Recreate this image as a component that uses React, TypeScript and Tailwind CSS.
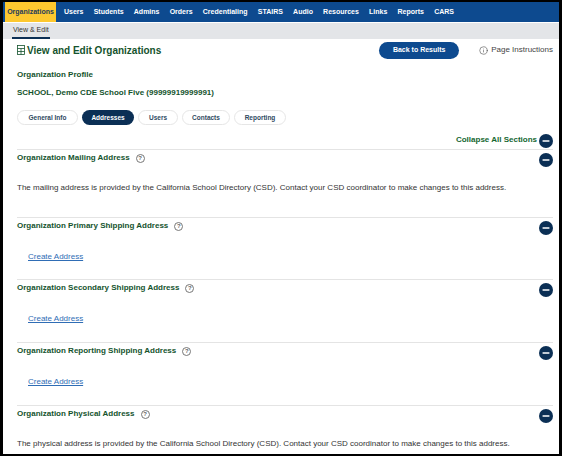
import { Info, Minus } from "lucide-react";

const navItems = ["Users", "Students", "Admins", "Orders", "Credentialing", "STAIRS", "Audio", "Resources", "Links", "Reports", "CARS"];
const tabs = [
  { label: "General Info", width: "w-[61px]" },
  { label: "Addresses", width: "w-[52px]" },
  { label: "Users", width: "w-[40px]" },
  { label: "Contacts", width: "w-[48px]" },
  { label: "Reporting", width: "w-[52px]" },
];
const csdNote = "address is provided by the California School Directory (CSD). Contact your CSD coordinator to make changes to this address.";

function CollapseIcon() {
  return (
    <span className="flex h-[14px] w-[14px] shrink-0 items-center justify-center rounded-full bg-[#0b2f55]">
      <Minus size={10} strokeWidth={3.5} className="text-white" />
    </span>
  );
}

function HelpIcon() {
  return (
    <span className="ml-[6px] flex h-[9px] w-[9px] items-center justify-center rounded-full border border-[#777] text-[6px] leading-none text-[#666]">
      ?
    </span>
  );
}

function Section({ title, note, height }: { title: string; note?: string; height: string }) {
  return (
    <section className={`border-t border-[#e4e4e4] ${height}`}>
      <div className="flex items-start justify-between pt-[2px]">
        <h3 className="flex items-center text-[8px] font-bold leading-[12px] text-[#14532d]">
          {title}
          <HelpIcon />
        </h3>
        <span className="mt-[1px]">
          <CollapseIcon />
        </span>
      </div>
      {note ? (
        <p className="mt-[15px] text-[8px] leading-[12px] text-[#333]">The {note} {csdNote}</p>
      ) : (
        <a className="ml-[11px] mt-[16px] block text-[8px] leading-[12px] text-[#2f6db5] underline">Create Address</a>
      )}
    </section>
  );
}

export default function App() {
  return (
    <div className="h-[456px] w-[562px] overflow-hidden bg-black pb-[2px] pl-[3px] pr-[3px] pt-[2px] font-['Liberation_Sans',Arial,sans-serif]">
      <div className="h-full overflow-hidden bg-white">
        <nav className="flex h-[20px] bg-[#0d4a8f] pl-[2px] text-[7px] font-bold text-white">
          <span className="flex w-[51px] items-center justify-center bg-[#fdc82f] text-[#1d3b5c]">Organizations</span>
          <div className="ml-[8px] flex items-center gap-[10.2px]">
            {navItems.map((item) => (
              <span key={item}>{item}</span>
            ))}
          </div>
        </nav>
        <div className="mt-[1px] flex h-[16px] bg-[#e3e5e8] pl-[9px] text-[7px] text-[#333]">
          <span className="flex h-full items-center border-b-2 border-[#0b2f55] px-[1px]">View &amp; Edit</span>
        </div>

        <div className="pl-[14px] pr-[6px]">
          <div className="mt-[2px] flex h-[18px] items-center justify-between">
            <h1 className="flex items-center text-[10px] font-bold text-[#14532d]">
              <svg width="8" height="10" viewBox="0 0 8 10" fill="none" stroke="#14532d" strokeWidth="0.8" className="mr-[2px]">
                <rect x="0.5" y="0.5" width="7" height="9" />
                <path d="M4 3.5V9.5M0.5 3.5H7.5M0.5 6.5H7.5" />
              </svg>
              View and Edit Organizations
            </h1>
            <div className="flex items-center">
              <button className="h-[17px] w-[80px] rounded-full bg-[#0d4a8f] text-[7px] font-bold text-white">Back to Results</button>
              <span className="ml-[20px] flex items-center text-[8px] text-[#444]">
                <Info size={9} strokeWidth={1.5} className="mr-[3px]" />
                Page Instructions
              </span>
            </div>
          </div>

          <p className="mt-[10px] text-[8px] font-bold leading-[12px] text-[#14532d]">Organization Profile</p>
          <p className="mt-[6px] text-[8px] font-bold leading-[12px] text-[#14532d]">SCHOOL, Demo CDE School Five (99999919999991)</p>

          <div className="mt-[11px] flex gap-[4px] text-[6.5px] font-bold">
            {tabs.map((tab) =>
              tab.label === "Addresses" ? (
                <span key={tab.label} className={`flex h-[15px] items-center justify-center rounded-full bg-[#0b2f55] text-white ${tab.width}`}>
                  {tab.label}
                </span>
              ) : (
                <span key={tab.label} className={`flex h-[15px] items-center justify-center rounded-full border border-[#e6e6e6] text-[#2f4a5f] ${tab.width}`}>
                  {tab.label}
                </span>
              )
            )}
          </div>

          <div className="mb-[3px] mt-[8px] flex h-[13px] items-center justify-end gap-[2px] text-[8px] font-bold text-[#14662f]">
            Collapse All Sections
            <span className="mt-[2px]">
              <CollapseIcon />
            </span>
          </div>

          <Section title="Organization Mailing Address" note="mailing" height="h-[68px]" />
          <Section title="Organization Primary Shipping Address" height="h-[62px]" />
          <Section title="Organization Secondary Shipping Address" height="h-[63px]" />
          <Section title="Organization Reporting Shipping Address" height="h-[63px]" />
          <Section title="Organization Physical Address" note="physical" height="h-[60px]" />
        </div>
      </div>
    </div>
  );
}
